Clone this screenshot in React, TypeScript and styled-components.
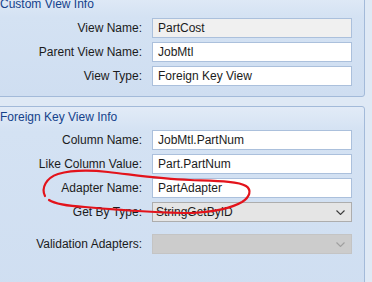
import React from 'react';
import styled, { createGlobalStyle } from 'styled-components';

const GlobalStyle = createGlobalStyle`
  html, body {
    margin: 0;
    padding: 0;
    background: #dfe9f5;
    font-family: "Liberation Sans", Arial, sans-serif;
  }
`;

const Screen = styled.div`
  position: relative;
  width: 372px;
  height: 282px;
  overflow: hidden;
  background: #dfe9f5;
`;

const Stack = styled.div`
  display: flex;
  flex-direction: column;
  gap: 9px;
  margin: -8px 0 0 -3px;
  width: 368px;
`;

const GroupBox = styled.section`
  border: 1px solid #a3bad9;
  border-radius: 3px;
  background: linear-gradient(to bottom, #e2ebf7 0px, #d4e2f3 24px, #cfdef1 100%);
  padding: 0 12px 10px 0;
`;

const GroupTitle = styled.div<{ $top: number; $gap: number }>`
  height: 17px;
  line-height: 17px;
  padding: ${(p) => p.$top}px 0 0 2px;
  margin-bottom: ${(p) => p.$gap}px;
  font-size: 12px;
  color: #15428b;
  white-space: nowrap;
`;

const Fields = styled.div`
  display: grid;
  grid-template-columns: 144px 200px;
  column-gap: 10px;
  row-gap: 4px;
`;

const Label = styled.label<{ $extra?: number }>`
  display: flex;
  align-items: center;
  justify-content: flex-end;
  height: 20px;
  margin-top: ${(p) => p.$extra || 0}px;
  font-size: 12px;
  color: #1b1b1b;
  white-space: nowrap;
`;

const TextBox = styled.div<{ $readOnly?: boolean }>`
  box-sizing: border-box;
  height: 20px;
  padding: 0 5px;
  display: flex;
  align-items: center;
  border: 1px solid #abc0dc;
  background: ${(p) => (p.$readOnly ? '#f0f0f0' : '#ffffff')};
  font-size: 12px;
  color: #1b1b1b;
`;

const Combo = styled.div<{ $disabled?: boolean; $extra?: number }>`
  box-sizing: border-box;
  height: 20px;
  margin-top: ${(p) => p.$extra || 0}px;
  padding: 0 6px 0 3px;
  display: flex;
  align-items: center;
  justify-content: space-between;
  border: 1px solid ${(p) => (p.$disabled ? '#c4c4c4' : '#adadad')};
  background: ${(p) => (p.$disabled ? '#cccccc' : '#e5e5e5')};
  font-size: 12px;
  color: #1b1b1b;
`;

const Filler = styled.div`
  height: 40px;
`;

const Chevron = ({ color }: { color: string }) => (
  <svg width="9" height="5" viewBox="0 0 9 5">
    <path d="M0.5 0.5 L4.5 4.5 L8.5 0.5" fill="none" stroke={color} strokeWidth="1.1" />
  </svg>
);

const Annotation = styled.svg`
  position: absolute;
  left: 0;
  top: 0;
  pointer-events: none;
`;

const customRows = [
  { label: 'View Name:', value: 'PartCost', readOnly: true },
  { label: 'Parent View Name:', value: 'JobMtl' },
  { label: 'View Type:', value: 'Foreign Key View' },
];

const fkRows = [
  { label: 'Column Name:', value: 'JobMtl.PartNum' },
  { label: 'Like Column Value:', value: 'Part.PartNum' },
  { label: 'Adapter Name:', value: 'PartAdapter' },
];

export default function App() {
  return (
    <Screen>
      <GlobalStyle />
      <Stack>
        <GroupBox>
          <GroupTitle $top={3} $gap={5}>Custom View Info</GroupTitle>
          <Fields>
            {customRows.map((r) => (
              <React.Fragment key={r.label}>
                <Label>{r.label}</Label>
                <TextBox $readOnly={r.readOnly}>{r.value}</TextBox>
              </React.Fragment>
            ))}
          </Fields>
        </GroupBox>
        <GroupBox>
          <GroupTitle $top={2} $gap={4}>Foreign Key View Info</GroupTitle>
          <Fields>
            {fkRows.map((r) => (
              <React.Fragment key={r.label}>
                <Label>{r.label}</Label>
                <TextBox>{r.value}</TextBox>
              </React.Fragment>
            ))}
            <Label>Get By Type:</Label>
            <Combo>
              <span>StringGetByID</span>
              <Chevron color="#3c3c3c" />
            </Combo>
            <Label $extra={8}>Validation Adapters:</Label>
            <Combo $disabled $extra={8}>
              <span />
              <Chevron color="#a0a0a0" />
            </Combo>
          </Fields>
          <Filler />
        </GroupBox>
      </Stack>
      <Annotation width="372" height="282" viewBox="0 0 372 282">
        <path
          d="M45 196 C41 188 46 178 58 174 C72 170 90 170 108 172 C135 175 160 179 190 180 C215 181 238 181 246 186 C252 190 250 197 242 202 C230 209 212 212 192 213 C160 213 120 210 85 207 C68 206 55 204 49 200"
          fill="none"
          stroke="#e3131b"
          strokeWidth="2.2"
          strokeLinecap="round"
        />
      </Annotation>
    </Screen>
  );
}
